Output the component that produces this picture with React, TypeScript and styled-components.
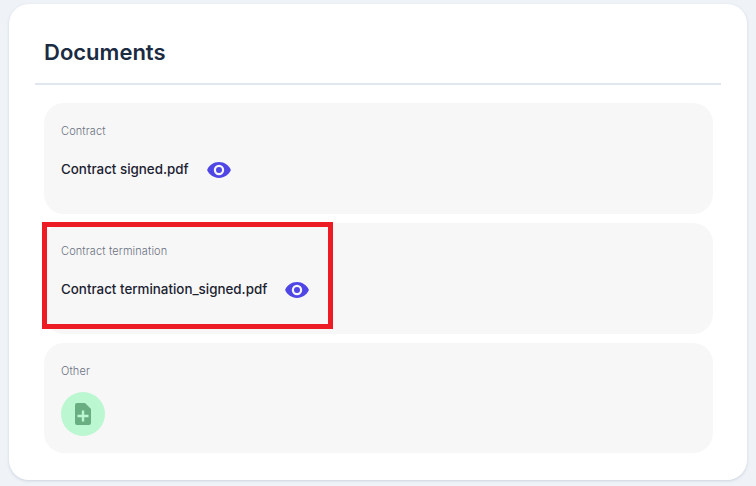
import React from 'react';
import styled, { createGlobalStyle } from 'styled-components';

const GlobalStyle = createGlobalStyle`
  html, body {
    margin: 0;
    padding: 0;
    background: #eff3f8;
    font-family: "Inter", "Liberation Sans", sans-serif;
  }
`;

const Page = styled.div`
  position: relative;
  width: 756px;
  height: 486px;
  overflow: hidden;
  box-sizing: border-box;
  padding: 4px 9px 6px;
`;

const Card = styled.section`
  height: 476px;
  box-sizing: border-box;
  background: #fff;
  border-radius: 20px;
  box-shadow: 0 1px 3px rgba(100, 116, 139, 0.25);
  padding: 0 26px;
`;

const Header = styled.header`
  height: 81px;
  box-sizing: border-box;
  padding: 35px 0 0 9px;
  border-bottom: 2px solid #e2e6ef;
`;

const Title = styled.h1`
  margin: 0;
  font-size: 22px;
  line-height: 27px;
  font-weight: 600;
  color: #1a2b42;
`;

const List = styled.div`
  display: flex;
  flex-direction: column;
  gap: 9px;
  margin: 18px 8px 0 9px;
`;

const Panel = styled.article<{ $height?: number }>`
  height: ${(p) => p.$height ?? 111}px;
  box-sizing: border-box;
  background: #f7f7f8;
  border-radius: 20px;
  padding: 21px 17px 0;
`;

const Label = styled.div`
  font-size: 11px;
  line-height: 14px;
  font-weight: 300;
  letter-spacing: 0.12px;
  color: #6b7280;
`;

const FileRow = styled.div`
  display: flex;
  align-items: center;
  gap: 18px;
  margin-top: 19px;
  height: 24px;
`;

const FileName = styled.span`
  font-size: 13.37px;
  line-height: 20px;
  font-weight: 500;
  color: #1b2230;
`;

const EyeIcon = styled.svg`
  display: block;
  width: 24px;
  height: 16px;
  margin-top: 2px;
  fill: #4f46e5;
`;

const AddButton = styled.button`
  display: flex;
  align-items: center;
  justify-content: center;
  width: 44px;
  height: 44px;
  margin-top: 14px;
  padding: 0;
  border: none;
  border-radius: 50%;
  background: #bbf7d0;
`;

const Highlight = styled.div`
  position: absolute;
  left: 42px;
  top: 222px;
  width: 291px;
  height: 107px;
  box-sizing: border-box;
  border: 5px solid #ed1c24;
  pointer-events: none;
`;

const Eye = () => (
  <EyeIcon viewBox="0 0 24 16" aria-hidden="true">
    <path
      fillRule="evenodd"
      d="M12 0C6.5 0 2.2 3.6.4 7.2a1.8 1.8 0 0 0 0 1.6C2.2 12.4 6.5 16 12 16s9.8-3.6 11.6-7.2a1.8 1.8 0 0 0 0-1.6C21.8 3.6 17.5 0 12 0zm0 13.2a5.2 5.2 0 1 1 0-10.4 5.2 5.2 0 0 1 0 10.4zM12 5a3 3 0 1 0 0 6 3 3 0 0 0 0-6z"
    />
  </EyeIcon>
);

const FileAdd = () => (
  <svg width="16" height="22" viewBox="0 0 16 22" aria-hidden="true">
    <path
      d="M2 0h8l6 6v14a2 2 0 0 1-2 2H2a2 2 0 0 1-2-2V2a2 2 0 0 1 2-2z"
      fill="#68ae82"
    />
    <path d="M6.8 7.5h2.4v4.3h4.3v2.4H9.2v4.3H6.8v-4.3H2.5v-2.4h4.3z" fill="#bbf7d0" />
  </svg>
);

const documents = [
  { label: 'Contract', file: 'Contract signed.pdf' },
  { label: 'Contract termination', file: 'Contract termination_signed.pdf' },
];

export default function App() {
  return (
    <>
      <GlobalStyle />
      <Page>
        <Card>
          <Header>
            <Title>Documents</Title>
          </Header>
          <List>
            {documents.map((doc) => (
              <Panel key={doc.label}>
                <Label>{doc.label}</Label>
                <FileRow>
                  <FileName>{doc.file}</FileName>
                  <Eye />
                </FileRow>
              </Panel>
            ))}
            <Panel $height={110}>
              <Label>Other</Label>
              <AddButton type="button" aria-label="Add document">
                <FileAdd />
              </AddButton>
            </Panel>
          </List>
        </Card>
        <Highlight />
      </Page>
    </>
  );
}
